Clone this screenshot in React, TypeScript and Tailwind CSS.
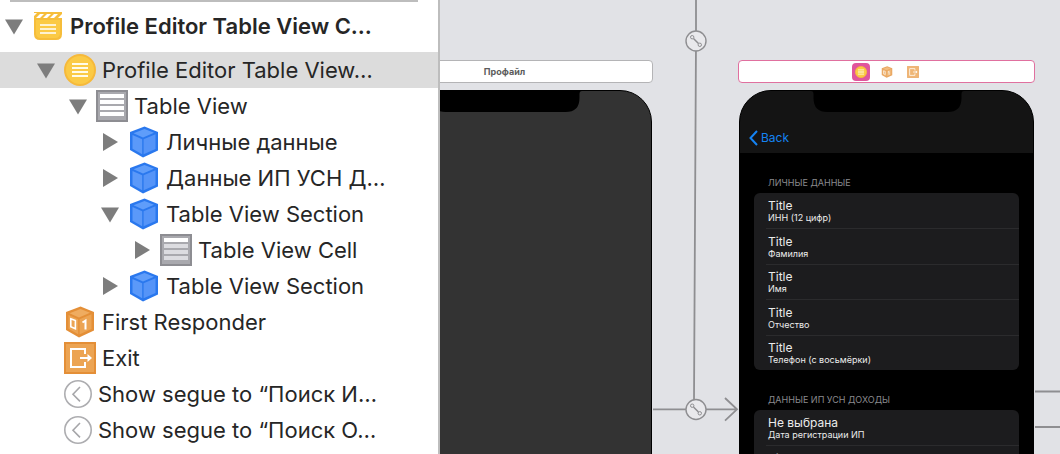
import type { ReactNode } from "react";
import clsx from "clsx";

type IconName = "scene" | "controller" | "table" | "section" | "cell" | "responder" | "exit" | "segue";

interface OutlineItem {
  label: string;
  icon: IconName;
  depth: number;
  open?: boolean;
  selected?: boolean;
}

const outline: OutlineItem[] = [
  { label: "Profile Editor Table View…", icon: "controller", depth: 1, open: true, selected: true },
  { label: "Table View", icon: "table", depth: 2, open: true },
  { label: "Личные данные", icon: "section", depth: 3, open: false },
  { label: "Данные ИП УСН Д…", icon: "section", depth: 3, open: false },
  { label: "Table View Section", icon: "section", depth: 3, open: true },
  { label: "Table View Cell", icon: "cell", depth: 4, open: false },
  { label: "Table View Section", icon: "section", depth: 3, open: false },
  { label: "First Responder", icon: "responder", depth: 1 },
  { label: "Exit", icon: "exit", depth: 1 },
  { label: "Show segue to “Поиск И…", icon: "segue", depth: 1 },
  { label: "Show segue to “Поиск О…", icon: "segue", depth: 1 },
];

const indents = ["pl-0", "pl-8", "pl-16", "pl-24", "pl-32"];

const personalFields = [
  { title: "Title", detail: "ИНН (12 цифр)" },
  { title: "Title", detail: "Фамилия" },
  { title: "Title", detail: "Имя" },
  { title: "Title", detail: "Отчество" },
  { title: "Title", detail: "Телефон (с восьмёрки)" },
];

const businessFields = [
  { title: "Не выбрана", detail: "Дата регистрации ИП" },
  { title: "Title", detail: "Title" },
];

function SceneIcon() {
  return (
    <svg viewBox="0 0 28 28" className="size-7" aria-hidden="true">
      <path d="M0 0h28v22q0 6-6 6H6q-6 0-6-6z" fill="#f6bd3a" />
      <path d="M2 8h24v13q0 5-5 5H7q-5 0-5-5z" fill="#fbca45" />
      <path d="M2 6l4-4h4L6 6zM9 6l4-4h4l-4 4zM16 6l4-4h4l-4 4z" fill="#fff" />
      <path d="M0 1h3L0 4zM24 6l4-4v4z" fill="#fff" />
      <path d="M6 13h16M6 17h16M6 21h16" stroke="#fff" strokeWidth="1.700" />
    </svg>
  );
}

function ControllerIcon({ className = "size-8" }: { className?: string }) {
  return (
    <svg viewBox="0 0 32 32" className={className} aria-hidden="true">
      <circle cx="16" cy="16" r="15" fill="#fbca45" stroke="#f6b93a" strokeWidth="2" />
      <path d="M8 10h16M8 14h16M8 18h16M8 22h16" stroke="#fffbe8" strokeWidth="1.800" />
    </svg>
  );
}

function TableIcon() {
  return (
    <svg viewBox="0 0 32 32" className="size-8" aria-hidden="true">
      <path d="M1 1h30v30H1z" fill="#a9a9ae" stroke="#8d8d92" strokeWidth="2" />
      <path d="M4 4h24v4H4zM4 10h24v4H4zM4 16h24v4H4zM4 22h24v4H4z" fill="#fff" />
    </svg>
  );
}

function CellIcon() {
  return (
    <svg viewBox="0 0 32 32" className="size-8" aria-hidden="true">
      <path d="M1 1h30v30H1z" fill="#a9a9ae" stroke="#8d8d92" strokeWidth="2" />
      <path d="M4 4h24v4H4z" fill="#fff" />
      <path d="M4 10h24v4H4zM4 16h24v4H4zM4 22h24v4H4z" fill="#dcdce0" />
    </svg>
  );
}

function SectionIcon() {
  return (
    <svg viewBox="0 0 32 32" className="size-8" aria-hidden="true">
      <path d="M16.500 .5L30 6v18.500L15 31.500 2 24V6z" fill="#2a78ee" />
      <path d="M16.500 3L26 6.800 15 11.500 5.500 7.200z" fill="#5f9dfa" />
      <path d="M4.500 9l9.700 4.200v15L4.500 22.700z" fill="#5b99f9" />
      <path d="M15.600 13.200L27.500 8.300v14.600l-11.900 5.400z" fill="#5594f8" />
    </svg>
  );
}

function ResponderIcon({ className = "size-8" }: { className?: string }) {
  return (
    <svg viewBox="0 0 32 32" className={className} aria-hidden="true">
      <path d="M16.500 .5L30 6v18.500L15 31.500 2 24V6z" fill="#e48f37" />
      <path d="M16.500 3L26 6.800 15 11.500 5.500 7.200z" fill="#efac60" />
      <path d="M4.500 9l9.700 4.200v15L4.500 22.700z" fill="#eca453" />
      <path d="M15.600 13.200L27.500 8.300v14.600l-11.900 5.400z" fill="#eca453" />
      <path d="M6.800 12.800l4.600 1.800v8.200l-4.600-2z" fill="none" stroke="#fff" strokeWidth="1.600" />
      <path d="M18.500 16.500l3-2v9" fill="none" stroke="#fff" strokeWidth="2" />
    </svg>
  );
}

function ExitIcon({ className = "size-8" }: { className?: string }) {
  return (
    <svg viewBox="0 0 32 32" className={className} aria-hidden="true">
      <path d="M1 1h30v30H1z" fill="#eca453" stroke="#e48f37" strokeWidth="2" />
      <path d="M21 12V7H7v18h14v-5M16 16h9" fill="none" stroke="#fff" strokeWidth="2" />
      <path d="M23.500 12l4.500 4-4.500 4z" fill="#fff" />
    </svg>
  );
}

function SegueIcon() {
  return (
    <svg viewBox="0 0 28 28" className="size-7" aria-hidden="true">
      <circle cx="14" cy="14" r="13.200" fill="#fff" stroke="#adadb0" strokeWidth="1.600" />
      <path d="M16 7l-7 7.200 7 7.200" fill="none" stroke="#a6a6a9" strokeWidth="1.600" />
    </svg>
  );
}

const icons: Record<IconName, ReactNode> = {
  scene: <SceneIcon />,
  controller: <ControllerIcon />,
  table: <TableIcon />,
  section: <SectionIcon />,
  cell: <CellIcon />,
  responder: <ResponderIcon />,
  exit: <ExitIcon />,
  segue: <SegueIcon />,
};

function Disclosure({ open, label }: { open: boolean; label: string }) {
  return (
    <button
      type="button"
      aria-expanded={open}
      aria-label={label}
      className={clsx("flex h-full w-7 items-center justify-center", open && "pt-px")}
    >
      <svg viewBox="0 0 18 18" className="size-[18px]" aria-hidden="true">
        <path d={open ? "M0 1.500h18L9 16.500z" : "M2 0v18l15-9z"} fill="#7d7d7d" />
      </svg>
    </button>
  );
}

function OutlineRow({ item }: { item: OutlineItem }) {
  const { label, icon, depth, open, selected } = item;

  return (
    <li className={clsx("flex h-9 items-center", indents[depth], selected && "bg-[#dcdcdc]")}>
      <div className="h-full w-8 shrink-0">
        {open !== undefined && <Disclosure open={open} label={label} />}
      </div>
      <div className={clsx("flex shrink-0 justify-center", icon === "segue" ? "w-7" : "w-8")}>{icons[icon]}</div>
      <span className={clsx("pl-1.5 text-[22px] whitespace-nowrap", depth === 0 && "font-semibold")}>{label}</span>
    </li>
  );
}

function Outline() {
  return (
    <aside className="w-[440px] shrink-0 border-r-2 border-[#bdbdbd] bg-white text-[#262626]">
      <div className="mr-5 ml-2.5 h-0.5 bg-[#bdbdbd]" />
      <ul className="pt-1.5">
        <OutlineRow item={{ label: "Profile Editor Table View C…", icon: "scene", depth: 0, open: true }} />
      </ul>
      <ul className="pt-2">
        {outline.map((item, index) => (
          <OutlineRow key={index} item={item} />
        ))}
      </ul>
    </aside>
  );
}

function Notch() {
  return (
    <svg viewBox="0 0 153 21" className="absolute top-0 left-[71px] h-[21px] w-[153px]" aria-hidden="true">
      <path d="M0 0h153q-2.500 0-2.500 3v4q0 14-14 14h-120Q2.500 21 2.500 7V3Q2.500 0 0 0z" fill="#000" />
    </svg>
  );
}

function FieldGroup({ heading, fields }: { heading: string; fields: { title: string; detail: string }[] }) {
  return (
    <section>
      <h2 className="pl-7 text-[9px] leading-3 text-[#8a8a8e]">{heading}</h2>
      <ul className="mx-3.5 mt-1 overflow-hidden rounded-md bg-[#1c1c1e] pl-3">
        {fields.map((field, index) => (
          <li
            key={index}
            className={clsx(
              "flex flex-col justify-center pl-0.5 odd:h-[35px] even:h-9",
              index > 0 && "border-t border-[#2b2b2d]"
            )}
          >
            <span className="text-xs leading-[14px] text-[#ececec]">{field.title}</span>
            <span className="text-[9px] leading-[10px] text-[#ececec]">{field.detail}</span>
          </li>
        ))}
      </ul>
    </section>
  );
}

function ProfileScene() {
  return (
    <div className="absolute top-[60px] left-[-84px] w-[297px]">
      <div className="flex h-[23px] items-center justify-center rounded border border-[#b4b4b6] bg-white text-[9px] font-bold text-[#5c5c5c]">
        Профайл
      </div>
      <div className="relative mx-px mt-[7px] h-[640px] rounded-[32px] border border-black bg-[#333]">
        <Notch />
      </div>
    </div>
  );
}

function EditorScene() {
  return (
    <div className="absolute top-[60px] left-[298px] w-[297px]">
      <div className="flex h-[23px] items-center justify-center gap-2 rounded border border-[#e0709f] bg-white">
        <div className="flex size-[18px] items-center justify-center rounded bg-[#e0559c]">
          <ControllerIcon className="size-3" />
        </div>
        <div className="flex size-[18px] items-center justify-center">
          <ResponderIcon className="size-3 opacity-80" />
        </div>
        <div className="flex size-[18px] items-center justify-center">
          <ExitIcon className="size-3 opacity-80" />
        </div>
      </div>
      <div className="relative mx-px mt-[7px] h-[640px] overflow-hidden rounded-[32px] border border-black bg-black">
        <Notch />
        <nav className="h-[62px] bg-[#141414] pt-[38px] pl-[9px]">
          <button type="button" className="flex items-center gap-[3px] text-xs leading-[18px] text-[#1583f2]">
            <svg viewBox="0 0 9 16" className="h-4 w-[9px]" aria-hidden="true">
              <path d="M8 1L1.500 8 8 15" fill="none" stroke="currentColor" strokeWidth="2" />
            </svg>
            Back
          </button>
        </nav>
        <div className="flex flex-col gap-6 pt-6">
          <FieldGroup heading="ЛИЧНЫЕ ДАННЫЕ" fields={personalFields} />
          <FieldGroup heading="ДАННЫЕ ИП УСН ДОХОДЫ" fields={businessFields} />
        </div>
      </div>
    </div>
  );
}

function SegueBadge({ x, y }: { x: number; y: number }) {
  return (
    <g transform={`translate(${x} ${y})`} stroke="#8e8e91" fill="#e9e9ec">
      <circle r="10" strokeWidth="1.400" />
      <path d="M-2.500-2.500l5 5" strokeWidth="1.500" />
      <circle cx="-3.800" cy="-3.800" r="1.700" strokeWidth="1" />
      <circle cx="3.800" cy="3.800" r="1.700" strokeWidth="1" />
    </g>
  );
}

function Connections() {
  return (
    <svg viewBox="0 0 620 454" className="absolute top-0 left-0 h-[454px] w-[620px]" aria-hidden="true">
      <g fill="none" stroke="#8e8e91" strokeWidth="1.800">
        <path d="M256 0v41L254 400M213 409.300h83M285 398l12 11.300-12 11.300" />
        <path d="M595 391.500h25M595 427h25" />
      </g>
      <SegueBadge x={256} y={41} />
      <SegueBadge x={256} y={409.5} />
    </svg>
  );
}

export default function App() {
  return (
    <div className="flex h-screen overflow-hidden font-['Inter','Noto_Sans',sans-serif]">
      <Outline />
      <main className="relative min-w-0 flex-1 overflow-hidden bg-[#e1e2e6]">
        <ProfileScene />
        <EditorScene />
        <Connections />
      </main>
    </div>
  );
}
